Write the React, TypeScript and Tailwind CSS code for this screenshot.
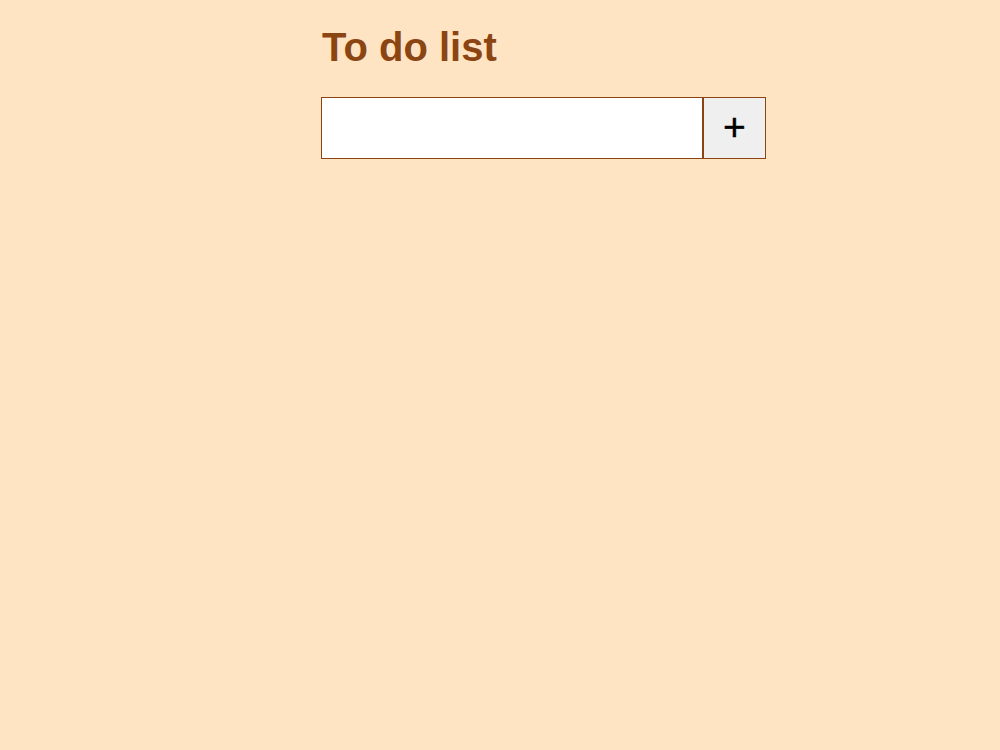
import React, { useState } from "react";

export default function App() {
  const [value, setValue] = useState("");
  return (
    <div className="min-h-[750px] w-full bg-[#ffe4c4] font-['Liberation_Sans',Arial,sans-serif]">
      <div className="flex flex-col pl-[321px] pt-[25px]">
        <h1 className="ml-px text-[40px] font-bold leading-[normal] text-[#8b4513]">To do list</h1>
        <div className="mt-[27px] flex">
          <input
            value={value}
            onChange={(e) => setValue(e.target.value)}
            className="box-border h-[62px] w-[382px] border border-[#8b4513] bg-white px-2 text-base outline-none"
          />
          <button className="box-border flex h-[62px] w-[63px] items-center justify-center border border-[#8b4513] bg-[#efefef] pb-[3px] text-[39px] leading-none text-black [-webkit-text-stroke:0.4px_black]">
            +
          </button>
        </div>
      </div>
    </div>
  );
}
